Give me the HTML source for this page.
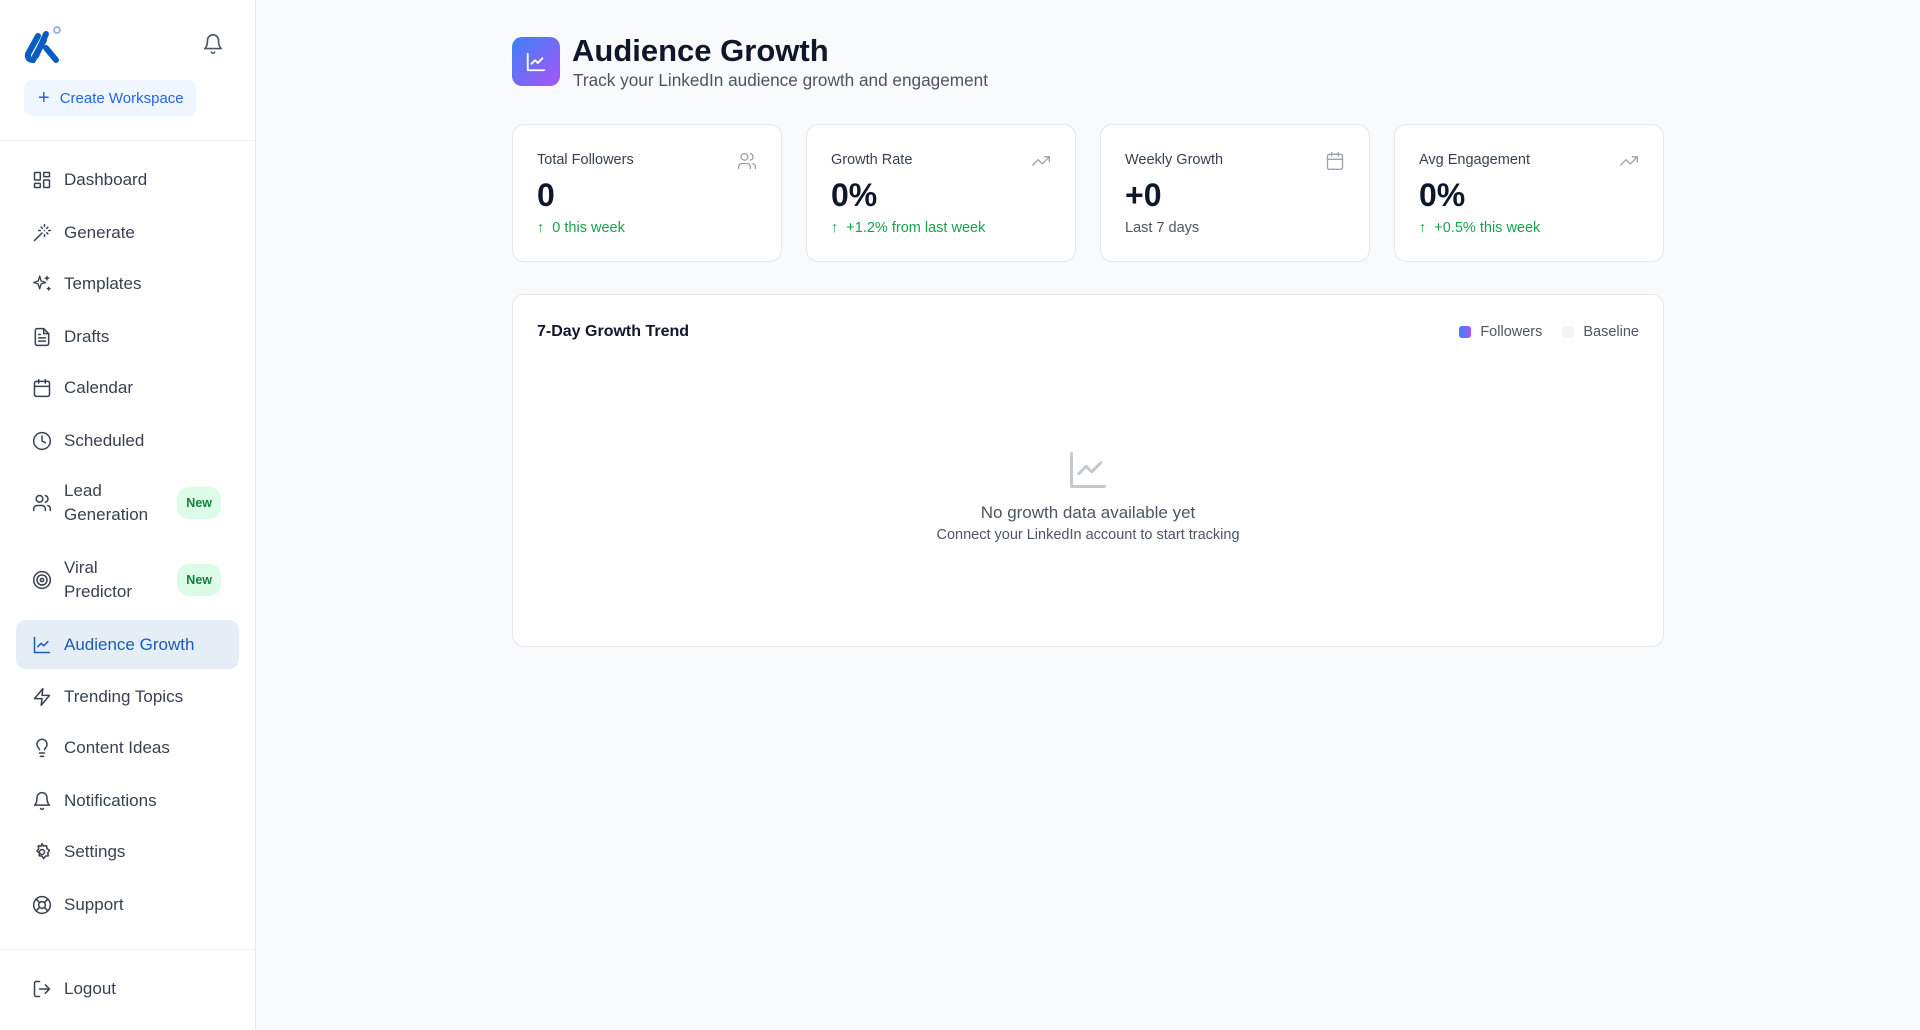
<!DOCTYPE html>
<html><head><meta charset="utf-8"><style>
*{box-sizing:border-box;margin:0;padding:0}
body{width:1920px;height:1030px;background:#f8fafc;font-family:"Liberation Sans",sans-serif;position:relative;overflow:hidden;color:#0f172a}
.sb{position:absolute;left:0;top:0;width:256px;height:1030px;background:#fff;border-right:1px solid #e5e7eb}
.hr{position:absolute;left:0;width:255px;height:1px;background:#eef0f3}
.nav{position:absolute;left:16px;width:223px;height:48px;display:flex;align-items:center;padding-left:16px;font-size:17px;color:#374151;border-radius:10px}
.nav svg{width:20px;height:20px;margin-right:12px;flex:none;stroke:#374151;fill:none;stroke-width:1.8;stroke-linecap:round;stroke-linejoin:round}
.nav.two{line-height:24px}
.nav.act{background:#e5edf7;color:#1d5bb8}
.nav.act svg{stroke:#1d5bb8}
.new{position:absolute;right:18px;top:50%;transform:translateY(-50%);background:#dcfce7;color:#15803d;font-size:12.5px;font-weight:bold;padding:4px 9px;border-radius:12px}
.card{position:absolute;top:124px;width:270px;height:138px;background:#fff;border:1px solid #e5e7eb;border-radius:12px}
.card .l{position:absolute;left:24px;top:27px;font-size:14.5px;color:#374151}
.card .v{position:absolute;left:24px;top:52px;font-size:32px;font-weight:bold;color:#0f172a}
.card .s{position:absolute;left:24px;top:95px;font-size:14.5px;color:#16a34a}
.card .s.g{color:#4b5563}
.card svg.i{position:absolute;right:24px;top:26px;width:20px;height:20px;fill:none;stroke:#9ca3af;stroke-width:1.6;stroke-linecap:round;stroke-linejoin:round}
</style></head><body>
<div class="sb">
<svg style="position:absolute;left:24px;top:24px" width="42" height="42" viewBox="0 0 42 42">
<path d="M14 12 L4 30 Q3 36 9 36 L20 16" stroke="#0a5cc2" stroke-width="6" fill="none" stroke-linecap="round"/>
<path d="M22 10 L12 32" stroke="#0a5cc2" stroke-width="6" stroke-linecap="round"/>
<path d="M22 24 L32 36" stroke="#0a5cc2" stroke-width="6" stroke-linecap="round"/>
<circle cx="33" cy="6" r="3" fill="none" stroke="#7aa7e0" stroke-width="1.5"/>
</svg>
<svg style="position:absolute;left:202px;top:33px" width="22" height="22" viewBox="0 0 24 24" fill="none" stroke="#4b5563" stroke-width="1.8" stroke-linecap="round" stroke-linejoin="round"><path d="M6 8a6 6 0 0 1 12 0c0 7 3 9 3 9H3s3-2 3-9"/><path d="M10.3 21a1.94 1.94 0 0 0 3.4 0"/></svg>
<div style="position:absolute;left:24px;top:80px;width:172px;height:36px;background:#eff6ff;border-radius:8px;color:#2563eb;font-size:15px;display:flex;align-items:center;padding-left:14px"><span style="font-size:20px;margin-right:10px;line-height:1">+</span>Create Workspace</div>
<div class="hr" style="top:140px"></div>

<div class="nav" style="top:156px"><svg viewBox="0 0 24 24"><rect x="3" y="3" width="7" height="9" rx="1"/><rect x="14" y="3" width="7" height="5" rx="1"/><rect x="14" y="12" width="7" height="9" rx="1"/><rect x="3" y="16" width="7" height="5" rx="1"/></svg>Dashboard</div>
<div class="nav" style="top:209px"><svg viewBox="0 0 24 24"><path d="M15 4V2M15 16v-2M8 9h2M20 9h2M17.8 11.8 19 13M15 9h0M17.8 6.2 19 5M3 21l9-9M12.2 6.2 11 5"/></svg>Generate</div>
<div class="nav" style="top:260px"><svg viewBox="0 0 24 24"><path d="M9.9 15.5 8 22l-2-6.5L0 13.6l6-2 2-6.6 2 6.6 6 2z" transform="translate(2 -2) scale(.9)"/><path d="M18 3v4M16 5h4M20 16v3M18.5 17.5h3"/></svg>Templates</div>
<div class="nav" style="top:313px"><svg viewBox="0 0 24 24"><path d="M14 2H6a2 2 0 0 0-2 2v16a2 2 0 0 0 2 2h12a2 2 0 0 0 2-2V8z"/><path d="M14 2v6h6M16 13H8M16 17H8M10 9H8"/></svg>Drafts</div>
<div class="nav" style="top:364px"><svg viewBox="0 0 24 24"><rect x="3" y="4" width="18" height="18" rx="2"/><path d="M16 2v4M8 2v4M3 10h18"/></svg>Calendar</div>
<div class="nav" style="top:417px"><svg viewBox="0 0 24 24"><circle cx="12" cy="12" r="10"/><path d="M12 6v6l4 2"/></svg>Scheduled</div>
<div class="nav two" style="top:479px"><svg viewBox="0 0 24 24"><path d="M16 21v-2a4 4 0 0 0-4-4H6a4 4 0 0 0-4 4v2"/><circle cx="9" cy="7" r="4"/><path d="M22 21v-2a4 4 0 0 0-3-3.9M16 3.1a4 4 0 0 1 0 7.8"/></svg><span>Lead<br>Generation</span><span class="new">New</span></div>
<div class="nav two" style="top:556px"><svg viewBox="0 0 24 24"><circle cx="12" cy="12" r="10"/><circle cx="12" cy="12" r="6"/><circle cx="12" cy="12" r="2"/></svg><span>Viral<br>Predictor</span><span class="new">New</span></div>
<div class="nav act" style="top:620px;height:49px"><svg viewBox="0 0 24 24"><path d="M3 3v18h18"/><path d="m7 14 4-4 3 3 5-5"/></svg>Audience Growth</div>
<div class="nav" style="top:673px"><svg viewBox="0 0 24 24"><path d="M13 2 3 14h9l-1 8 10-12h-9z"/></svg>Trending Topics</div>
<div class="nav" style="top:724px"><svg viewBox="0 0 24 24"><path d="M15 14c.2-1 .7-1.7 1.5-2.5A6 6 0 1 0 6 8c0 1 .2 2.2 1.5 3.5.7.7 1.300 1.5 1.5 2.5M9 18h6M10 22h4"/></svg>Content Ideas</div>
<div class="nav" style="top:777px"><svg viewBox="0 0 24 24"><path d="M6 8a6 6 0 0 1 12 0c0 7 3 9 3 9H3s3-2 3-9"/><path d="M10.3 21a1.94 1.94 0 0 0 3.4 0"/></svg>Notifications</div>
<div class="nav" style="top:828px"><svg viewBox="0 0 24 24"><circle cx="12" cy="12" r="3"/><path d="M12 2l2 3 3.5-.5.5 3.5 3 2-2 3 .5 3.5-3.5.5-2 3-2-3-3.5-.5.5-3.5-3-2 2-3-.5-3.5 3.5.5z"/></svg>Settings</div>
<div class="nav" style="top:881px"><svg viewBox="0 0 24 24"><circle cx="12" cy="12" r="10"/><circle cx="12" cy="12" r="4"/><path d="m4.9 4.9 4.3 4.3M14.8 14.8l4.3 4.3M14.8 9.2l4.3-4.3M9.2 14.8l-4.3 4.3"/></svg>Support</div>
<div class="hr" style="top:949px"></div>
<div class="nav" style="top:965px"><svg viewBox="0 0 24 24"><path d="M9 21H5a2 2 0 0 1-2-2V5a2 2 0 0 1 2-2h4M16 17l5-5-5-5M21 12H9"/></svg>Logout</div>
</div>

<div style="position:absolute;left:512px;top:37px;width:48px;height:49px;border-radius:10px;background:linear-gradient(135deg,#3b82f6,#a855f7)"><svg style="position:absolute;left:13px;top:14px" width="22" height="22" viewBox="0 0 24 24" fill="none" stroke="#fff" stroke-width="2" stroke-linecap="round" stroke-linejoin="round"><path d="M3 3v18h18"/><path d="m7 14 4-4 3 3 5-5"/></svg></div>
<div style="position:absolute;left:572px;top:33px;font-size:31px;font-weight:bold;color:#0f172a">Audience Growth</div>
<div style="position:absolute;left:573px;top:70px;font-size:17.2px;color:#4b5563">Track your LinkedIn audience growth and engagement</div>

<div class="card" style="left:512px"><div class="l">Total Followers</div><svg class="i" viewBox="0 0 24 24"><path d="M16 21v-2a4 4 0 0 0-4-4H6a4 4 0 0 0-4 4v2"/><circle cx="9" cy="7" r="4"/><path d="M22 21v-2a4 4 0 0 0-3-3.9M16 3.1a4 4 0 0 1 0 7.8"/></svg><div class="v">0</div><div class="s">↑&nbsp; 0 this week</div></div>
<div class="card" style="left:806px"><div class="l">Growth Rate</div><svg class="i" viewBox="0 0 24 24"><path d="m22 7-8.5 8.5-5-5L2 17"/><path d="M16 7h6v6"/></svg><div class="v">0%</div><div class="s">↑&nbsp; +1.2% from last week</div></div>
<div class="card" style="left:1100px"><div class="l">Weekly Growth</div><svg class="i" viewBox="0 0 24 24"><rect x="3" y="4" width="18" height="18" rx="2"/><path d="M16 2v4M8 2v4M3 10h18"/></svg><div class="v">+0</div><div class="s g">Last 7 days</div></div>
<div class="card" style="left:1394px"><div class="l">Avg Engagement</div><svg class="i" viewBox="0 0 24 24"><path d="m22 7-8.5 8.5-5-5L2 17"/><path d="M16 7h6v6"/></svg><div class="v">0%</div><div class="s">↑&nbsp; +0.5% this week</div></div>

<div style="position:absolute;left:512px;top:294px;width:1152px;height:353px;background:#fff;border:1px solid #e5e7eb;border-radius:12px">
<div style="position:absolute;left:24px;top:28px;font-size:16px;font-weight:bold;color:#0f172a">7-Day Growth Trend</div>
<div style="position:absolute;right:24px;top:29px;font-size:14.5px;color:#4b5563;display:flex;align-items:center">
<span style="width:12px;height:12px;border-radius:3px;background:linear-gradient(90deg,#3b82f6,#a855f7);margin-right:9px"></span>Followers
<span style="width:12px;height:12px;border-radius:3px;background:#f1f3f6;margin:0 9px 0 20px"></span>Baseline</div>
<svg style="position:absolute;left:553px;top:153px" width="44" height="44" viewBox="0 0 24 24" fill="none" stroke="#c4c8cf" stroke-width="1.6" stroke-linecap="round" stroke-linejoin="round"><path d="M3 3v18h18"/><path d="m7 14 4-4 3 3 5-5"/></svg>
<div style="position:absolute;left:0;right:0;top:208px;text-align:center;font-size:17px;color:#4b5563">No growth data available yet</div>
<div style="position:absolute;left:0;right:0;top:232px;text-align:center;font-size:14.5px;color:#4b5563">Connect your LinkedIn account to start tracking</div>
</div>
</body></html>
